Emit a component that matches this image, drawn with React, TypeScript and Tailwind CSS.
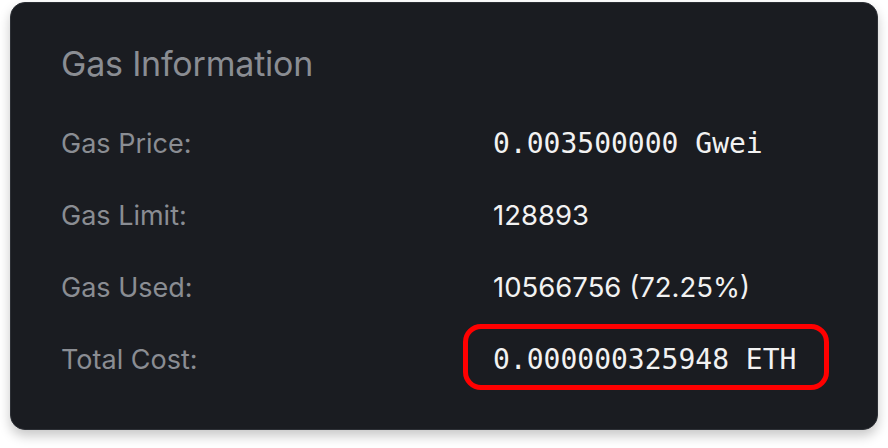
const rows = [
  { label: "Gas Price:", value: "0.003500000 Gwei", mono: true },
  { label: "Gas Limit:", value: "128893" },
  { label: "Gas Used:", value: "10566756 (72.25%)" },
  { label: "Total Cost:", value: "0.000000325948 ETH", mono: true, highlight: true },
];

export default function App() {
  return (
    <div className="w-[888px] h-[448px] bg-white pt-[2px] pl-[10px] font-['Inter',sans-serif]">
      <div className="w-[868px] h-[428px] rounded-[15px] bg-[#1a1c21] border border-[#2c2f35] shadow-[0_6px_12px_rgba(0,0,0,0.22)] pl-[50px] pt-[41px]">
        <h2 className="text-[34px] leading-[40px] tracking-[-0.2px] text-[#8a8d93] font-normal">Gas Information</h2>

        <div className="mt-[24px] grid grid-cols-[432px_1fr]">
          {rows.map((row) => (
            <div key={row.label} className="contents">
              <div className="h-[72px] flex items-center text-[27px] text-[#8a8d93]">{row.label}</div>
              <div className="h-[72px] flex items-center">
                {row.highlight ? (
                  <div className="-ml-[30px] -mt-[7px] w-[366px] h-[66px] pl-[25px] pt-[7px] flex items-center border-[5px] border-[#ff0000] rounded-[18px]">
                    <span className="font-['DejaVu_Sans_Mono',monospace] text-[28px] text-[#f2f2f2]">
                      {row.value}
                    </span>
                  </div>
                ) : (
                  <span
                    className={
                      row.mono
                        ? "font-['DejaVu_Sans_Mono',monospace] text-[28px] text-[#f2f2f2]"
                        : "text-[27.5px] text-[#f2f2f2]"
                    }
                  >
                    {row.value}
                  </span>
                )}
              </div>
            </div>
          ))}
        </div>
      </div>
    </div>
  );
}
